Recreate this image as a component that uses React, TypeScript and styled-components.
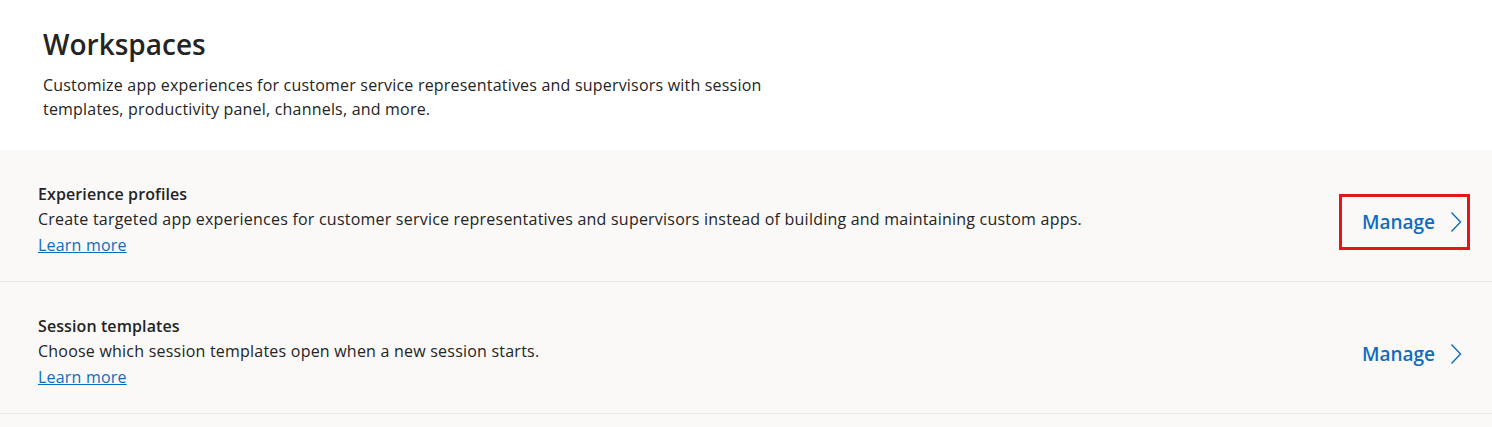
import React from "react";
import styled, { createGlobalStyle } from "styled-components";

const Global = createGlobalStyle`
  html, body { margin: 0; padding: 0; background: #ffffff; }
  body { font-family: "Open Sans", "Noto Sans", sans-serif; color: #242424; }
`;

const Page = styled.div`
  display: flex;
  flex-direction: column;
`;

const Header = styled.header`
  padding: 26px 43px 29px;
`;

const Title = styled.h1`
  margin: 0 0 11px;
  font-size: 28px;
  font-weight: 600;
  line-height: 36px;
  color: #242424;
`;

const Intro = styled.p`
  margin: 0;
  max-width: 760px;
  font-size: 16px;
  line-height: 24px;
  letter-spacing: 0.2px;
  color: #242424;
`;

const List = styled.div`
  background: #faf9f8;
  display: flex;
  flex-direction: column;
`;

const Row = styled.section`
  display: flex;
  align-items: center;
  justify-content: space-between;
  padding: 32px 22px 23px 38px;
  border-bottom: 1px solid #edebe9;
`;

const Info = styled.div`
  display: flex;
  flex-direction: column;
`;

const RowTitle = styled.h2`
  margin: 0;
  font-size: 16px;
  font-weight: 600;
  line-height: 24px;
  letter-spacing: 0.1px;
  color: #242424;
`;

const RowText = styled.p`
  margin: 0;
  font-size: 16px;
  line-height: 26px;
  letter-spacing: 0.22px;
  color: #242424;
`;

const Learn = styled.a`
  font-size: 16px;
  line-height: 26px;
  letter-spacing: 0.2px;
  color: #0f6cbd;
  text-decoration: underline;
  align-self: flex-start;
`;

const ManageButton = styled.button<{ $highlight?: boolean }>`
  display: flex;
  align-items: center;
  gap: 15px;
  margin-top: 3px;
  padding: 12px 5px 12px 20px;
  background: transparent;
  border: 3px solid ${(p) => (p.$highlight ? "#e3161e" : "transparent")};
  font-family: inherit;
  font-size: 19px;
  font-weight: 600;
  color: #0f6cbd;
  cursor: pointer;
`;

const Chevron = () => (
  <svg width="12" height="22" viewBox="0 0 12 22" fill="none">
    <path d="M1.5 1.5 L10.5 11 L1.5 20.5" stroke="#0f6cbd" strokeWidth="1.4" />
  </svg>
);

const rows = [
  {
    title: "Experience profiles",
    text: "Create targeted app experiences for customer service representatives and supervisors instead of building and maintaining custom apps.",
    highlight: true,
  },
  {
    title: "Session templates",
    text: "Choose which session templates open when a new session starts.",
    highlight: false,
  },
];

export default function App() {
  return (
    <Page>
      <Global />
      <Header>
        <Title>Workspaces</Title>
        <Intro>
          Customize app experiences for customer service representatives and supervisors with session
          templates, productivity panel, channels, and more.
        </Intro>
      </Header>
      <List>
        {rows.map((r) => (
          <Row key={r.title}>
            <Info>
              <RowTitle>{r.title}</RowTitle>
              <RowText>{r.text}</RowText>
              <Learn href="#">Learn more</Learn>
            </Info>
            <ManageButton $highlight={r.highlight}>
              Manage
              <Chevron />
            </ManageButton>
          </Row>
        ))}
        <div style={{ height: 20 }} />
      </List>
    </Page>
  );
}
